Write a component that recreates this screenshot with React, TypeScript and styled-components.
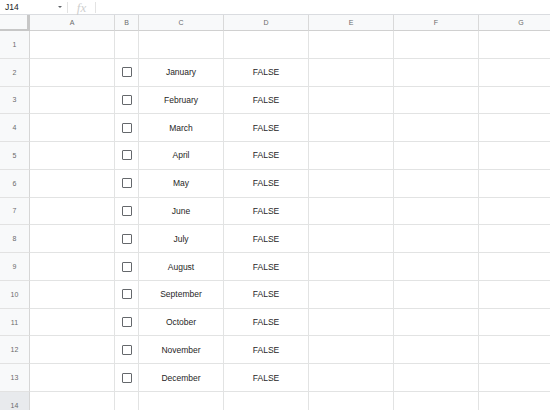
import React from "react";
import styled, { createGlobalStyle } from "styled-components";

const Global = createGlobalStyle`
  html, body { margin: 0; padding: 0; background: #fff; overflow: hidden; }
  body { font-family: "Liberation Sans", Arial, sans-serif; }
`;

const Page = styled.div`
  width: 550px;
  height: 410px;
  overflow: hidden;
  display: flex;
  flex-direction: column;
`;

const FormulaBar = styled.div`
  height: 14px;
  display: flex;
  align-items: center;
  border-bottom: 1px solid #dadce0;
  flex-shrink: 0;
`;

const NameBox = styled.div`
  width: 67px;
  box-sizing: border-box;
  padding-left: 5px;
  padding-right: 5px;
  display: flex;
  align-items: center;
  justify-content: space-between;
  font-size: 8.5px;
  color: #202124;
`;

const Caret = styled.span`
  width: 0;
  height: 0;
  border-left: 2.5px solid transparent;
  border-right: 2.5px solid transparent;
  border-top: 2.5px solid #5f6368;
`;

const Divider = styled.div`
  width: 1px;
  height: 11px;
  background: #e3e3e3;
`;

const Fx = styled.div`
  width: 27px;
  text-align: center;
  font-family: "Liberation Serif", serif;
  font-style: italic;
  font-size: 13px;
  color: #cfcfcf;
  line-height: 13px;
`;

const Grid = styled.div`
  display: grid;
  grid-template-columns: 30px 85px 24px 85px 85px 85px 85px 85px;
  grid-template-rows: 16px repeat(14, 27.77px);
`;

const Corner = styled.div`
  background: #f8f9fa;
  box-sizing: border-box;
  border-right: 3px solid #c7c7c7;
  border-bottom: 2px solid #c7c7c7;
`;

const ColHead = styled.div`
  background: #f8f9fa;
  box-sizing: border-box;
  border-right: 1px solid #d9d9d9;
  border-bottom: 1px solid #d0d0d0;
  display: flex;
  align-items: center;
  justify-content: center;
  font-size: 7px;
  color: #6b6b6b;
`;

const RowHead = styled.div<{ $active?: boolean }>`
  background: ${(p) => (p.$active ? "#e8eaed" : "#f8f9fa")};
  box-sizing: border-box;
  border-right: 1px solid #d6d6d6;
  border-bottom: 1px solid #e2e2e2;
  display: flex;
  align-items: center;
  justify-content: center;
  font-size: 7px;
  color: #6b6b6b;
`;

const Cell = styled.div`
  box-sizing: border-box;
  border-right: 1px solid #e2e3e3;
  border-bottom: 1px solid #e2e3e3;
  display: flex;
  align-items: center;
  justify-content: center;
  font-size: 8.5px;
  color: #262626;
`;

const Box = styled.span`
  width: 10px;
  height: 10px;
  box-sizing: border-box;
  border: 1.5px solid #65686c;
  border-radius: 1px;
`;

const cols = ["A", "B", "C", "D", "E", "F", "G"];
const months = [
  "January",
  "February",
  "March",
  "April",
  "May",
  "June",
  "July",
  "August",
  "September",
  "October",
  "November",
  "December",
];

export default function App() {
  const rows = Array.from({ length: 14 }, (_, i) => i + 1);
  return (
    <Page>
      <Global />
      <FormulaBar>
        <NameBox>
          J14
          <Caret />
        </NameBox>
        <Divider />
        <Fx>fx</Fx>
        <Divider />
      </FormulaBar>
      <Grid>
        <Corner />
        {cols.map((c) => (
          <ColHead key={c}>{c}</ColHead>
        ))}
        {rows.map((r) => {
          const m = r >= 2 && r <= 13 ? months[r - 2] : null;
          return (
            <React.Fragment key={r}>
              <RowHead $active={r === 14}>{r}</RowHead>
              <Cell />
              <Cell>{m && <Box />}</Cell>
              <Cell>{m}</Cell>
              <Cell>{m && "FALSE"}</Cell>
              <Cell />
              <Cell />
              <Cell />
            </React.Fragment>
          );
        })}
      </Grid>
    </Page>
  );
}
